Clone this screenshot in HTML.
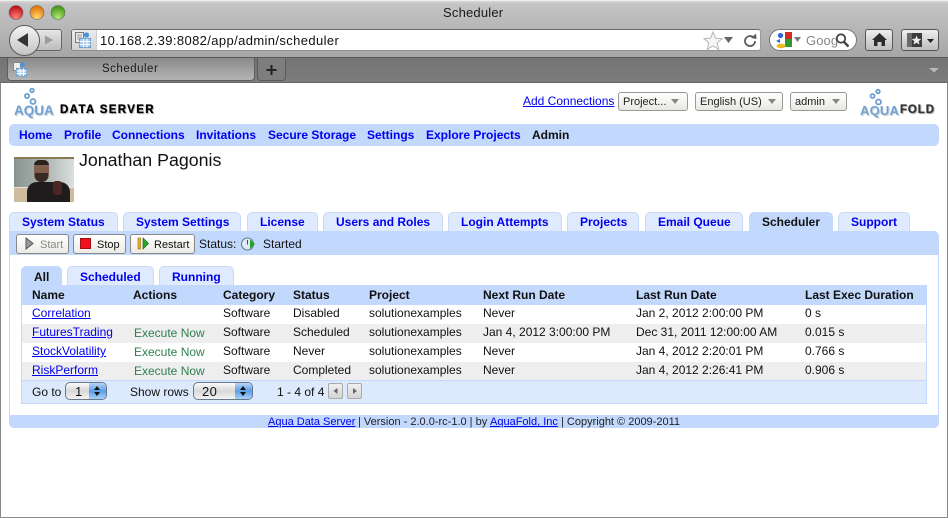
<!DOCTYPE html>
<html><head><meta charset="utf-8"><title>Scheduler</title>
<style>
html,body{margin:0;padding:0;background:#fff}
body{width:948px;height:518px;position:relative;overflow:hidden;font:12px/14px "Liberation Sans",Arial,sans-serif;color:#111}
div,a,span.t,svg{position:absolute}
.t{white-space:nowrap}
a{color:#00e;text-decoration:underline;white-space:nowrap}
.b{font-weight:bold;color:#00e;white-space:nowrap;position:absolute}
.k{font-weight:bold;color:#111;white-space:nowrap;position:absolute}
.tab{background:#dfeaff;border:1px solid #c8daf8;border-bottom:0;border-radius:5px 5px 0 0;box-sizing:border-box}
.tab.on{background:#c3d8fd;border-color:#c3d8fd}
.sel{height:19px;box-sizing:border-box;border:1px solid #999;border-radius:3px;background:linear-gradient(#fff,#e8e8e2);top:92px;line-height:18px;padding-left:4px;color:#222;font-size:11px}
.sel i{position:absolute;right:6px;top:6px;width:0;height:0;border:4px solid transparent;border-top:5px solid #888;border-bottom:0}
.btn{top:234px;height:20px;box-sizing:border-box;border:1px solid #888;border-radius:3px;background:linear-gradient(#fff,#ecebe6);line-height:18px}
.e{color:#2e8050;white-space:nowrap;position:absolute}
.row{left:22px;width:904px;height:19px}
.spin{top:382px;height:18px;box-sizing:border-box;border:1px solid #68788c;border-radius:5px;background:linear-gradient(#fafafa,#d8d8d8 50%,#f4f4f4);font-size:13px;line-height:17px;overflow:hidden;letter-spacing:.4px}
.spin b{position:absolute;right:0;top:0;width:17px;height:16px;background:linear-gradient(#b8d4f5,#5a9ee8 50%,#a8d0f8)}
.spin b:before{content:"";position:absolute;left:5px;top:3px;border:3.5px solid transparent;border-top:0;border-bottom:4px solid #111}
.spin b:after{content:"";position:absolute;left:5px;top:9px;border:3.5px solid transparent;border-bottom:0;border-top:4px solid #111}
.pg{top:383px;width:15px;height:16px;box-sizing:border-box;border:1px solid #aaa;border-radius:2px;background:linear-gradient(#f0f0f0,#d4d4d4)}
</style></head><body>

<!-- browser chrome -->
<div style="left:0;top:0;width:948px;height:58px;background:linear-gradient(#d8d8d8 0,#c4c4c4 3px,#a6a6a6 100%);border-top:1px solid #eee;box-sizing:border-box"></div>
<div style="left:0;top:57px;width:948px;height:1px;background:#585858"></div>
<div style="left:0;top:58px;width:948px;height:25px;background:linear-gradient(#747474,#7c7c7c);border-bottom:1px solid #555;box-sizing:border-box"></div>
<div style="left:0;top:82px;width:948px;height:1px;background:#666"></div>

<svg style="left:0;top:0" width="80" height="24"><defs>
<radialGradient id="r" cx=".5" cy=".85" r=".8"><stop offset="0" stop-color="#ff8078"/><stop offset="1" stop-color="#c00c18"/></radialGradient>
<radialGradient id="y" cx=".5" cy=".85" r=".8"><stop offset="0" stop-color="#ffd868"/><stop offset="1" stop-color="#e07008"/></radialGradient>
<radialGradient id="g" cx=".5" cy=".85" r=".8"><stop offset="0" stop-color="#b0e878"/><stop offset="1" stop-color="#409414"/></radialGradient></defs>
<circle cx="16" cy="12.5" r="7" fill="url(#r)" stroke="#666" stroke-width=".6"/>
<circle cx="37" cy="12.5" r="7" fill="url(#y)" stroke="#666" stroke-width=".6"/>
<circle cx="58" cy="12.5" r="7" fill="url(#g)" stroke="#666" stroke-width=".6"/></svg>
<span class="t" style="position:absolute;left:443px;top:5px;font-size:13px;line-height:15px;color:#1a1a1a;letter-spacing:.2px">Scheduler</span>

<!-- back / forward -->
<div style="left:30px;top:29px;width:32px;height:22px;box-sizing:border-box;border:1px solid #666;border-radius:3px;background:linear-gradient(#e6e6e6,#bdbdbd)"></div>
<div style="left:9px;top:25px;width:29px;height:29px;border:1px solid #5a5a5a;border-radius:50%;background:linear-gradient(#f4f4f4,#c4c4c4)"></div>
<svg style="left:0;top:25px" width="62" height="30"><path d="M17 15L28 8V22Z" fill="#333"/><path d="M45 10.500L53 15L45 19.500Z" fill="#9a9a9a"/></svg>

<!-- url bar -->
<div style="left:71px;top:29px;width:690px;height:22px;border:1px solid #6a6a6a;border-right-color:#999;border-bottom-color:#8e8e8e;border-radius:3px;background:#fff;box-sizing:border-box"></div>
<div style="left:72px;top:30px;width:24px;height:20px;background:linear-gradient(#ececec,#d4d4d4);border-right:1px solid #ccc;border-radius:2px 0 0 2px"></div>
<svg style="left:74px;top:31px" width="20" height="18"><rect x="1.500" y="1.500" width="8" height="10" fill="#eee" stroke="#777"/><path d="M3 4H8M3 6H8M3 8H5" stroke="#999"/><circle cx="12.500" cy="4" r="2.600" fill="#4a94dc"/><rect x="5.500" y="7.500" width="11" height="9" fill="#a9cdf0" stroke="#6a9cc8"/><path d="M5.500 10.500H16.500M5.500 13.500H16.500M9.500 7.500V16.500M13 7.500V16.500" stroke="#fff"/></svg>
<span class="t" style="position:absolute;left:100px;top:33px;font-size:13px;line-height:15px;color:#111;letter-spacing:.38px">10.168.2.39:8082/app/admin/scheduler</span>
<svg style="left:700px;top:28px" width="60" height="24"><path d="M13 4L15.600 10.200L22 10.700L17.200 15L18.700 21.300L13 18L7.300 21.300L8.800 15L4 10.700L10.400 10.200Z" fill="#f6f6f6" stroke="#b4b4b4"/><path d="M24 9H33L28.500 15Z" fill="#666"/><path d="M55 13A5 5 0 1 1 53.500 9.500" fill="none" stroke="#5c5c5c" stroke-width="1.800"/><path d="M51 10L56.500 11L56 5.500Z" fill="#5c5c5c"/></svg>

<!-- search box -->
<div style="left:769px;top:29px;width:88px;height:22px;box-sizing:border-box;border:1px solid #777;border-radius:11px;background:#fff;overflow:hidden"></div>
<svg style="left:775px;top:32px" width="26" height="17"><rect x="10" y="0" width="7" height="7" fill="#d42a20"/><circle cx="5.500" cy="3.500" r="2.600" fill="#2a6ad8"/><path d="M1 9L5 7V11Z" fill="#2a6ad8"/><rect x="10" y="7" width="7" height="8" fill="#2f9a30"/><ellipse cx="6" cy="14" rx="4.500" ry="2.300" fill="#eeb820"/><path d="M19 5H26L22.500 10Z" fill="#777"/></svg>
<span class="t" style="position:absolute;left:806px;top:33px;font-size:13px;line-height:15px;color:#888;letter-spacing:.1px">Goog</span>
<svg style="left:834px;top:32px" width="18" height="16"><circle cx="7" cy="6.500" r="4.200" fill="#fff" stroke="#444" stroke-width="1.800"/><path d="M10 10L14.500 14.500" stroke="#444" stroke-width="2.400"/></svg>

<!-- home / bookmarks -->
<div style="left:865px;top:29px;width:28px;height:22px;box-sizing:border-box;border:1px solid #555;border-radius:3px;background:linear-gradient(#eee,#bdbdbd)"></div>
<svg style="left:865px;top:29px" width="28" height="22"><path d="M14.500 4L22 11H20V17H16.500V13H12.500V17H9V11H7Z" fill="#2c2c2c"/></svg>
<div style="left:901px;top:29px;width:38px;height:22px;box-sizing:border-box;border:1px solid #555;border-radius:3px;background:linear-gradient(#eee,#bdbdbd)"></div>
<svg style="left:901px;top:29px" width="38" height="22"><rect x="6" y="4" width="15" height="14" fill="#3c3c3c"/><rect x="6" y="4" width="5" height="14" fill="#6a6a6a"/><path d="M15.500 6.500L16.800 9.800L20.300 10L17.600 12.200L18.500 15.500L15.500 13.700L12.500 15.500L13.400 12.200L10.700 10L14.200 9.800Z" fill="#eee"/><path d="M26 10H33L29.500 14Z" fill="#222"/></svg>

<!-- tab strip -->
<div style="left:7px;top:58px;width:248px;height:23px;box-sizing:border-box;border:1px solid #5e5e5e;border-top:0;border-radius:0 0 4px 4px;background:linear-gradient(#8a8a8a,#b4b4b4)"></div>
<svg style="left:12px;top:61px" width="18" height="17"><rect x="1.500" y="1.500" width="7" height="8" fill="#eee" stroke="#888"/><circle cx="10.500" cy="3.500" r="2.400" fill="#4a94dc"/><rect x="4.500" y="7.500" width="10" height="7.500" fill="#a9cdf0" stroke="#6a9cc8"/><path d="M4.500 10H14.500M4.500 12.500H14.500M8 7.500V15M11.500 7.500V15" stroke="#fff"/></svg>
<span class="t" style="position:absolute;left:102px;top:62px;font-size:11.500px;line-height:14px;color:#1c1c1c;letter-spacing:.5px">Scheduler</span>
<div style="left:257px;top:58px;width:29px;height:23px;box-sizing:border-box;border:1px solid #5a5a5a;border-top:0;border-radius:0 0 4px 4px;background:#7e7e7e"></div>
<svg style="left:257px;top:59px" width="29" height="22"><path d="M14.500 6V16M9.500 11H19.500" stroke="#222" stroke-width="2"/></svg>
<svg style="left:928px;top:66px" width="14" height="10"><path d="M1 2H11L6 6.500Z" fill="#b8b8b8"/></svg>

<!-- window edges -->
<div style="left:0;top:83px;width:1px;height:435px;background:#8a8a8a"></div>
<div style="left:947px;top:83px;width:1px;height:435px;background:#8a8a8a"></div>
<div style="left:0;top:517px;width:948px;height:1px;background:#8a8a8a"></div>

<!-- logo left -->
<svg style="left:22px;top:87px" width="20" height="22"><g fill="none" stroke="#6f9fd0" stroke-width="1.800"><circle cx="10" cy="3.500" r="1.800"/><circle cx="5" cy="9" r="2.100"/><circle cx="11" cy="14.500" r="2.500"/></g></svg>
<span class="t" style="position:absolute;left:14px;top:103px;font-size:13.500px;line-height:16px;font-weight:bold;color:#6fa3d6;text-shadow:1px 1px 1px #ccc">AQUA</span>
<span class="t" style="position:absolute;left:60px;top:103px;font-size:11.500px;line-height:15px;font-weight:bold;color:#000;letter-spacing:1.350px;-webkit-text-stroke:.3px #000;text-shadow:1px 1px 1px #aaa">DATA SERVER</span>

<!-- top right -->
<a style="left:523px;top:94px">Add Connections</a>
<div class="sel" style="left:618px;width:70px">Project...<i style="right:8px"></i></div>
<div class="sel" style="left:695px;width:88px">English (US)<i></i></div>
<div class="sel" style="left:790px;width:57px;padding-left:4px">admin<i></i></div>
<svg style="left:868px;top:88px" width="20" height="22"><g fill="none" stroke="#6f9fd0" stroke-width="1.800"><circle cx="10" cy="3.500" r="1.800"/><circle cx="4.500" cy="8" r="2"/><circle cx="10.500" cy="14" r="2.500"/></g></svg>
<span class="t" style="position:absolute;left:860px;top:103px;font-size:13px;line-height:16px;font-weight:bold;color:#6fa3d6;letter-spacing:.2px;text-shadow:1px 1px 1px #ccc">AQUA</span>
<span class="t" style="position:absolute;left:900px;top:103px;font-size:11.500px;line-height:15px;font-weight:bold;color:#333;letter-spacing:.9px;-webkit-text-stroke:.3px #333;text-shadow:1px 1px 1px #aaa">FOLD</span>

<!-- nav -->
<div style="left:9px;top:124px;width:930px;height:22px;background:#c3d8fd;border-radius:5px"></div>
<span class="b" style="left:19px;top:128px">Home</span>
<span class="b" style="left:64px;top:128px">Profile</span>
<span class="b" style="left:112px;top:128px">Connections</span>
<span class="b" style="left:196px;top:128px">Invitations</span>
<span class="b" style="left:268px;top:128px">Secure Storage</span>
<span class="b" style="left:367px;top:128px">Settings</span>
<span class="b" style="left:426px;top:128px">Explore Projects</span>
<span class="k" style="left:532px;top:128px">Admin</span>

<!-- user -->
<div style="left:14px;top:157px;width:60px;height:45px;overflow:hidden;background:#c4b69a">
<div style="left:0;top:0;width:60px;height:2px;background:#8a7a54"></div>
<div style="left:0;top:2px;width:60px;height:28px;background:linear-gradient(90deg,#86948f,#aeb8b6 55%,#dcdfdd)"></div>
<div style="left:0;top:30px;width:60px;height:15px;background:#cdbd9e"></div>
<div style="left:0;top:30px;width:60px;height:1px;background:#e8e4d8"></div>
<div style="left:13px;top:25px;width:43px;height:20px;background:#201c1e;border-radius:10px 10px 0 0"></div>
<div style="left:20px;top:3px;width:15px;height:22px;background:#80604c;border-radius:7px"></div>
<div style="left:20px;top:3px;width:15px;height:5px;background:#2c221e;border-radius:7px 7px 0 0"></div>
<div style="left:21px;top:16px;width:13px;height:9px;background:#3a2a26;border-radius:0 0 6px 6px"></div>
<div style="left:39px;top:24px;width:9px;height:14px;background:#4a2624;border-radius:3px"></div>
</div>
<span class="t" style="position:absolute;left:79px;top:150px;font-size:17.800px;line-height:20px;color:#111">Jonathan Pagonis</span>

<!-- main tabs -->
<div class="tab" style="left:9px;top:212px;width:109px;height:19px"></div><span class="b" style="left:22px;top:215px">System Status</span>
<div class="tab" style="left:123px;top:212px;width:118px;height:19px"></div><span class="b" style="left:136px;top:215px">System Settings</span>
<div class="tab" style="left:247px;top:212px;width:71px;height:19px"></div><span class="b" style="left:260px;top:215px">License</span>
<div class="tab" style="left:323px;top:212px;width:120px;height:19px"></div><span class="b" style="left:336px;top:215px">Users and Roles</span>
<div class="tab" style="left:448px;top:212px;width:114px;height:19px"></div><span class="b" style="left:461px;top:215px">Login Attempts</span>
<div class="tab" style="left:567px;top:212px;width:72px;height:19px"></div><span class="b" style="left:580px;top:215px">Projects</span>
<div class="tab" style="left:645px;top:212px;width:98px;height:19px"></div><span class="b" style="left:658px;top:215px">Email Queue</span>
<div class="tab on" style="left:749px;top:212px;width:84px;height:19px"></div><span class="k" style="left:762px;top:215px">Scheduler</span>
<div class="tab" style="left:838px;top:212px;width:72px;height:19px"></div><span class="b" style="left:851px;top:215px">Support</span>

<!-- panel -->
<div style="left:9px;top:231px;width:930px;height:197px;box-sizing:border-box;background:#c3d8fd;border-radius:0 5px 5px 5px"></div>
<div style="left:10px;top:255px;width:928px;height:160px;background:#fff"></div>

<!-- toolbar -->
<div class="btn" style="left:16px;width:53px"></div>
<svg style="left:25px;top:237px" width="10" height="13"><path d="M1 1L8 6.500L1 12Z" fill="#999" stroke="#555"/></svg>
<span class="t" style="position:absolute;left:40px;top:238px;color:#888;font-size:11px">Start</span>
<div class="btn" style="left:73px;width:53px"></div>
<div style="left:80px;top:238px;width:9px;height:9px;background:#f01020;border:1px solid #a01010"></div>
<span class="t" style="position:absolute;left:97px;top:238px;color:#111;font-size:11px">Stop</span>
<div class="btn" style="left:130px;width:65px"></div>
<svg style="left:137px;top:237px" width="12" height="14"><rect x="1" y="1" width="2.500" height="11" fill="#e8b030" stroke="#a07810" stroke-width=".7"/><path d="M6 1L11.500 6.500L6 12Z" fill="#2aa82a" stroke="#186818" stroke-width=".7"/></svg>
<span class="t" style="position:absolute;left:154px;top:238px;color:#111;font-size:11px">Restart</span>
<span class="t" style="position:absolute;left:199px;top:237px;color:#111">Status:</span>
<svg style="left:240px;top:236px" width="16" height="16"><circle cx="7.500" cy="8" r="6" fill="#dfeaf4" stroke="#557a90"/><path d="M7.500 4V8.500" stroke="#446"/><path d="M10 3.500L15 8L10 13Z" fill="#2aa02a"/></svg>
<span class="t" style="position:absolute;left:263px;top:237px;color:#111">Started</span>

<!-- subtabs -->
<div class="tab on" style="left:21px;top:266px;width:41px;height:19px"></div><span class="k" style="left:34px;top:270px">All</span>
<div class="tab" style="left:67px;top:266px;width:87px;height:19px"></div><span class="b" style="left:80px;top:270px">Scheduled</span>
<div class="tab" style="left:159px;top:266px;width:75px;height:19px"></div><span class="b" style="left:172px;top:270px">Running</span>

<!-- table -->
<div style="left:21px;top:285px;width:906px;height:119px;box-sizing:border-box;border:1px solid #c3d8fd;background:#fff"></div>
<div style="left:21px;top:285px;width:906px;height:20px;background:#c3d8fd"></div>
<span class="k" style="left:32px;top:288px">Name</span>
<span class="k" style="left:133px;top:288px">Actions</span>
<span class="k" style="left:223px;top:288px">Category</span>
<span class="k" style="left:293px;top:288px">Status</span>
<span class="k" style="left:369px;top:288px">Project</span>
<span class="k" style="left:483px;top:288px">Next Run Date</span>
<span class="k" style="left:636px;top:288px">Last Run Date</span>
<span class="k" style="left:805px;top:288px">Last Exec Duration</span>

<div class="row" style="top:324px;background:#eee"></div>
<div class="row" style="top:362px;background:#eee;height:18px"></div>

<a style="left:32px;top:306px">Correlation</a>
<span class="t" style="position:absolute;left:223px;top:306px">Software</span>
<span class="t" style="position:absolute;left:293px;top:306px">Disabled</span>
<span class="t" style="position:absolute;left:369px;top:306px">solutionexamples</span>
<span class="t" style="position:absolute;left:483px;top:306px">Never</span>
<span class="t" style="position:absolute;left:636px;top:306px">Jan 2, 2012 2:00:00 PM</span>
<span class="t" style="position:absolute;left:805px;top:306px">0 s</span>

<a style="left:32px;top:325px">FuturesTrading</a>
<span class="e" style="left:134px;top:326px">Execute Now</span>
<span class="t" style="position:absolute;left:223px;top:325px">Software</span>
<span class="t" style="position:absolute;left:293px;top:325px">Scheduled</span>
<span class="t" style="position:absolute;left:369px;top:325px">solutionexamples</span>
<span class="t" style="position:absolute;left:483px;top:325px">Jan 4, 2012 3:00:00 PM</span>
<span class="t" style="position:absolute;left:636px;top:325px">Dec 31, 2011 12:00:00 AM</span>
<span class="t" style="position:absolute;left:805px;top:325px">0.015 s</span>

<a style="left:32px;top:344px">StockVolatility</a>
<span class="e" style="left:134px;top:345px">Execute Now</span>
<span class="t" style="position:absolute;left:223px;top:344px">Software</span>
<span class="t" style="position:absolute;left:293px;top:344px">Never</span>
<span class="t" style="position:absolute;left:369px;top:344px">solutionexamples</span>
<span class="t" style="position:absolute;left:483px;top:344px">Never</span>
<span class="t" style="position:absolute;left:636px;top:344px">Jan 4, 2012 2:20:01 PM</span>
<span class="t" style="position:absolute;left:805px;top:344px">0.766 s</span>

<a style="left:32px;top:363px">RiskPerform</a>
<span class="e" style="left:134px;top:364px">Execute Now</span>
<span class="t" style="position:absolute;left:223px;top:363px">Software</span>
<span class="t" style="position:absolute;left:293px;top:363px">Completed</span>
<span class="t" style="position:absolute;left:369px;top:363px">solutionexamples</span>
<span class="t" style="position:absolute;left:483px;top:363px">Never</span>
<span class="t" style="position:absolute;left:636px;top:363px">Jan 4, 2012 2:26:41 PM</span>
<span class="t" style="position:absolute;left:805px;top:363px">0.906 s</span>

<!-- pager -->
<div style="left:21px;top:380px;width:906px;height:24px;box-sizing:border-box;border:1px solid #c3d8fd;background:#dde9fd"></div>
<span class="t" style="position:absolute;left:32px;top:385px">Go to</span>
<div class="spin" style="left:65px;width:42px;padding-left:9px">1<b></b></div>
<span class="t" style="position:absolute;left:130px;top:385px">Show rows</span>
<div class="spin" style="left:193px;width:60px;padding-left:8px">20<b></b></div>
<span class="t" style="position:absolute;left:277px;top:385px">1 - 4 of 4</span>
<div class="pg" style="left:328px"></div>
<svg style="left:328px;top:383px" width="15" height="16"><path d="M9.500 5V11L5.500 8Z" fill="#666"/></svg>
<div class="pg" style="left:347px"></div>
<svg style="left:347px;top:383px" width="15" height="16"><path d="M6 5V11L10 8Z" fill="#666"/></svg>

<!-- footer -->
<a style="left:268px;top:415px;font-size:11px">Aqua Data Server</a>
<span class="t" style="position:absolute;left:358px;top:415px;font-size:11px;color:#222">| Version - 2.0.0-rc-1.0 | by</span>
<a style="left:490px;top:415px;font-size:11px">AquaFold, Inc</a>
<span class="t" style="position:absolute;left:561px;top:415px;font-size:11px;color:#222">| Copyright © 2009-2011</span>
</body></html>
